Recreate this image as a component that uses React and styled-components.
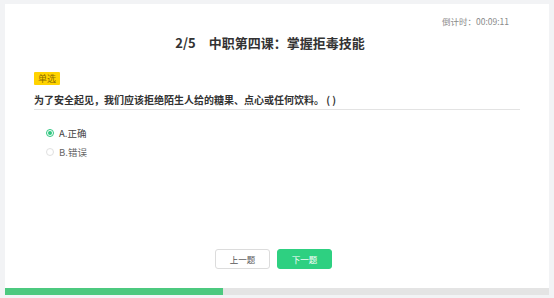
import React from "react";
import styled, { createGlobalStyle } from "styled-components";

const GlobalStyle = createGlobalStyle`
    html, body {
        margin: 0;
        padding: 0;
        background: #f2f3f5;
        font-family: "Noto Sans CJK SC", "Noto Sans", sans-serif;
    }
`;

const Page = styled.div`
    width: 554px;
    height: 298px;
    box-sizing: border-box;
    padding: 4px 5px 0 5px;
`;

const Card = styled.div`
    height: 291px;
    background: #ffffff;
    display: flex;
    flex-direction: column;
`;

const Timer = styled.div`
    align-self: flex-end;
    margin: 10px 40px 0 0;
    font-size: 8.5px;
    line-height: 14px;
    color: #8a8a8a;
`;

const Title = styled.div`
    margin-top: 6px;
    text-align: center;
    font-size: 13px;
    line-height: 18px;
    font-weight: 700;
    color: #333333;
    padding-right: 14px;
    span {
        margin-right: 13px;
    }
`;

const Body = styled.div`
    padding: 0 29px;
    margin-top: 11px;
    flex: 1;
`;

const Tag = styled.div`
    display: inline-block;
    background: #ffd300;
    color: #8c6b00;
    font-size: 9px;
    line-height: 13px;
    padding: 0 4px;
    border-radius: 1px;
`;

const Question = styled.div`
    margin-top: 4px;
    padding-bottom: 1px;
    border-bottom: 1px solid #e3e3e3;
    font-size: 10px;
    line-height: 17px;
    font-weight: 700;
    color: #333333;
`;

const Options = styled.div`
    margin-top: 15px;
    padding-left: 12px;
    display: flex;
    flex-direction: column;
    gap: 3px;
`;

const Option = styled.label`
    display: flex;
    align-items: center;
    gap: 5px;
    font-size: 9.5px;
    line-height: 16px;
    color: ${(p) => (p.checked ? "#444444" : "#666666")};
`;

const Radio = styled.span`
    width: 8px;
    height: 8px;
    box-sizing: border-box;
    border-radius: 50%;
    border: 1px solid ${(p) => (p.checked ? "#2fc67f" : "#e0e0e0")};
    display: flex;
    align-items: center;
    justify-content: center;
    &::after {
        content: "";
        width: 4px;
        height: 4px;
        border-radius: 50%;
        background: ${(p) => (p.checked ? "#2fc67f" : "transparent")};
    }
`;

const Footer = styled.div`
    display: flex;
    justify-content: center;
    gap: 7px;
    padding-right: 7px;
    margin-bottom: 19px;
`;

const Button = styled.button`
    width: 55px;
    height: 20px;
    box-sizing: border-box;
    border-radius: 3px;
    font-family: inherit;
    font-size: 8.5px;
    padding: 0;
    border: 1px solid ${(p) => (p.primary ? "#2ed081" : "#dcdcdc")};
    background: ${(p) => (p.primary ? "#2ed081" : "#ffffff")};
    color: ${(p) => (p.primary ? "#ffffff" : "#555555")};
`;

const Progress = styled.div`
    height: 7px;
    background: #e4e4e4;
`;

const ProgressFill = styled.div`
    height: 100%;
    background: #4cc97f;
`;

const options = [
    { key: "A", text: "A.正确", checked: true },
    { key: "B", text: "B.错误", checked: false },
];

function App() {
    const current = 2;
    const total = 5;

    return (
        <Page>
            <GlobalStyle />
            <Card>
                <Timer>倒计时：00:09:11</Timer>
                <Title>
                    <span>
                        {current}/{total}
                    </span>
                    中职第四课：掌握拒毒技能
                </Title>
                <Body>
                    <Tag>单选</Tag>
                    <Question>
                        为了安全起见，我们应该拒绝陌生人给的糖果、点心或任何饮料。 ( )
                    </Question>
                    <Options>
                        {options.map((o) => (
                            <Option key={o.key} checked={o.checked}>
                                <Radio checked={o.checked} />
                                {o.text}
                            </Option>
                        ))}
                    </Options>
                </Body>
                <Footer>
                    <Button>上一题</Button>
                    <Button primary>下一题</Button>
                </Footer>
                <Progress>
                    <ProgressFill
                        style={{ width: (current / total) * 100 + "%" }}
                    />
                </Progress>
            </Card>
        </Page>
    );
}

export default App;
